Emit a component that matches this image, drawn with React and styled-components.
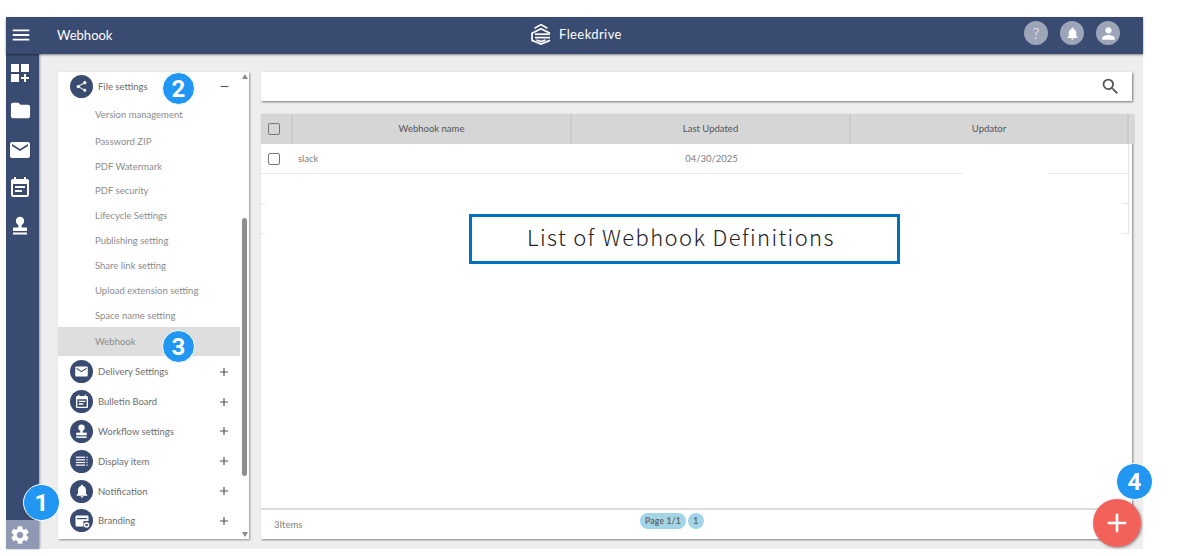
import React from 'react'
import styled, { createGlobalStyle } from 'styled-components'
import { MdMenu, MdDashboardCustomize, MdFolder, MdEmail, MdEventNote, MdSettings, MdShare, MdNotifications, MdPerson, MdSearch, MdAdd, MdRemove } from 'react-icons/md'

// icons the icon package doesn't have
const StampIcon = ({ size = 20 }) => (
  <svg width={size} height={size} viewBox="0 0 20 20" fill="currentColor">
    <circle cx="10" cy="5" r="4.2" />
    <rect x="8.4" y="7" width="3.2" height="5" />
    <path d="M3 11.5h14v3.5H3z" />
    <rect x="3" y="16.5" width="14" height="2" />
  </svg>
)

const ListIcon = ({ size = 14 }) => (
  <svg width={size} height={size} viewBox="0 0 16 16" fill="currentColor">
    <rect x="1" y="3" width="10.5" height="1.4" />
    <rect x="1" y="6" width="10.5" height="1.4" />
    <rect x="1" y="9" width="10.5" height="1.4" />
    <rect x="1" y="12" width="10.5" height="1.4" />
    <rect x="13" y="3" width="1.4" height="1.4" />
    <rect x="13" y="6" width="1.4" height="1.4" />
    <rect x="13" y="9" width="1.4" height="1.4" />
    <rect x="13" y="12" width="1.4" height="1.4" />
  </svg>
)

const BrandingIcon = ({ size = 16 }) => (
  <svg width={size} height={size} viewBox="0 0 16 16" fill="currentColor">
    <path d="M2.5 2.5h11a1 1 0 0 1 1 1V8h-5v5.5h-7a1 1 0 0 1-1-1v-9a1 1 0 0 1 1-1z" />
    <rect x="3" y="5" width="10" height="1.2" fill="#3a4b72" />
    <circle cx="12.6" cy="12" r="2" fill="none" stroke="currentColor" strokeWidth="1.4" />
  </svg>
)

const LogoMark = () => (
  <svg width="22" height="22" viewBox="0 0 22 22" fill="none" stroke="#fff" strokeWidth="1.7">
    <path d="M4.5 5.2 11 1.6l6.5 3.6" />
    <path d="M20 10.2 11 5.8 2 10.2v7.2L11 21l9-3.6" />
    <path d="M5 11.2h15" />
    <path d="M5 14.6h15" />
    <path d="M6.5 17 11 18.6l4.5-1.6" />
  </svg>
)

const railItems = [
  { name: 'dashboard', icon: <MdDashboardCustomize size={24} />, h: 37 },
  { name: 'folder', icon: <MdFolder size={23} />, h: 39 },
  { name: 'mail', icon: <MdEmail size={24} />, h: 39 },
  { name: 'board', icon: <MdEventNote size={24} />, h: 38 },
  { name: 'workflow', icon: <StampIcon />, h: 38 },
]

const subItems = [
  { label: 'Version management', h: 28 },
  { label: 'Password ZIP', h: 26 },
  { label: 'PDF Watermark', h: 24 },
  { label: 'PDF security', h: 25 },
  { label: 'Lifecycle Settings', h: 25 },
  { label: 'Publishing setting', h: 25 },
  { label: 'Share link setting', h: 25 },
  { label: 'Upload extension setting', h: 25 },
  { label: 'Space name setting', h: 24 },
  { label: 'Webhook', h: 29, active: true },
]

const groups = [
  { label: 'Delivery Settings', icon: <MdEmail size={15} /> },
  { label: 'Bulletin Board', icon: <MdEventNote size={16} /> },
  { label: 'Workflow settings', icon: <StampIcon size={15} /> },
  { label: 'Display item', icon: <ListIcon /> },
  { label: 'Notification', icon: <MdNotifications size={16} /> },
  { label: 'Branding', icon: <BrandingIcon /> },
]

const callouts = [
  { n: 1, x: 23, y: 484, d: 37 },
  { n: 2, x: 162, y: 72, d: 33 },
  { n: 3, x: 162, y: 330, d: 33 },
  { n: 4, x: 1116, y: 463, d: 37 },
]

export default function App() {
  return (
    <Page>
      <GlobalStyle />
      <Shell>
        <Header>
          <Burger><MdMenu size={22} /></Burger>
          <Title>Webhook</Title>
          <Logo><LogoMark /><LogoText>Fleekdrive</LogoText></Logo>
          <HeaderActions>
            <RoundAction><Help>?</Help></RoundAction>
            <RoundAction><MdNotifications size={15} /></RoundAction>
            <RoundAction><MdPerson size={19} /></RoundAction>
          </HeaderActions>
        </Header>
        <Body>
          <Rail>
            {railItems.map((r) => (
              <RailItem key={r.name} $h={r.h}>{r.icon}</RailItem>
            ))}
            <GearCell><MdSettings size={22} /></GearCell>
          </Rail>
          <Content>
            <MenuPanel>
              <MenuList>
                <GroupRow $h={28}>
                  <GroupIcon><MdShare size={13} /></GroupIcon>
                  <GroupLabel>File settings</GroupLabel>
                  <Toggle><MdRemove size={13} /></Toggle>
                </GroupRow>
                {subItems.map((s) => (
                  <SubRow key={s.label} $h={s.h} $active={s.active}>{s.label}</SubRow>
                ))}
                <Spacer />
                {groups.map((g) => (
                  <GroupRow key={g.label} $h={29.8}>
                    <GroupIcon>{g.icon}</GroupIcon>
                    <GroupLabel>{g.label}</GroupLabel>
                    <Toggle><MdAdd size={14} /></Toggle>
                  </GroupRow>
                ))}
              </MenuList>
              <Scrollbar>
                <ArrowUp />
                <Thumb />
                <ArrowDown />
              </Scrollbar>
            </MenuPanel>
            <Main>
              <SearchBar><MdSearch size={21} /></SearchBar>
              <TablePanel>
                <HeadRow>
                  <CheckCell><Check /></CheckCell>
                  <HeadCell>Webhook name</HeadCell>
                  <HeadCell>Last Updated</HeadCell>
                  <HeadCell>Updator</HeadCell>
                </HeadRow>
                <DataRow>
                  <CheckCell><Check /></CheckCell>
                  <DataCell>slack</DataCell>
                  <DataCell $center>04/30/2025</DataCell>
                  <DataCell />
                </DataRow>
                <DataRow />
                <DataRow />
                <RowsMask />
                <GapMask />
                <Footer>
                  <Count>3Items</Count>
                  <Pager>
                    <Pill>Page 1/1</Pill>
                    <Pill>1</Pill>
                  </Pager>
                </Footer>
              </TablePanel>
            </Main>
          </Content>
        </Body>
      </Shell>
      <Caption>List of Webhook Definitions</Caption>
      {callouts.map((c) => (
        <Callout key={c.n} $x={c.x} $y={c.y} $d={c.d}>{c.n}</Callout>
      ))}
      <Fab><MdAdd size={32} /></Fab>
    </Page>
  )
}

// view(CSS in JS)
const GlobalStyle = createGlobalStyle`
  body {
    margin: 0;
    background: #fff;
    font-family: "Lato", "Open Sans", sans-serif;
  }
`

const Page = styled.div`
  position: relative;
  width: 1177px;
  height: 556px;
  padding: 17px 0 0 6px;
  box-sizing: border-box;
  overflow: hidden;
`

const Shell = styled.div`
  display: flex;
  flex-direction: column;
  width: 1137px;
  height: 532px;
  background: #eeeeee;
`

const Header = styled.header`
  position: relative;
  display: grid;
  grid-template-columns: 33px 491px auto 1fr;
  align-items: center;
  height: 37px;
  flex: none;
  background: #3a4b72;
  color: #fff;
  box-shadow: 0 1px 2px rgba(0, 0, 0, 0.45);
`

const Burger = styled.div`
  display: flex;
  justify-content: center;
  padding: 0 4px 2px 0;
`

const Title = styled.div`
  padding: 0 0 1px 18px;
  font-size: 13px;
  font-weight: 400;
`

const Logo = styled.div`
  display: flex;
  align-items: center;
  gap: 7px;
  padding-bottom: 4px;
`

const LogoText = styled.span`
  font-size: 13px;
  font-weight: 400;
  letter-spacing: 0.4px;
  color: #fff;
`

const HeaderActions = styled.div`
  display: flex;
  justify-content: flex-end;
  gap: 12px;
  padding: 0 23px 5px 0;
`

const RoundAction = styled.div`
  display: flex;
  align-items: center;
  justify-content: center;
  width: 24px;
  height: 24px;
  border-radius: 50%;
  background: #9da5b9;
  color: #fff;
`

const Help = styled.span`
  font-size: 15px;
  font-weight: 300;
  line-height: 1;
`

const Body = styled.div`
  display: flex;
  flex: 1;
  min-height: 0;
`

const Rail = styled.nav`
  display: flex;
  flex-direction: column;
  flex: none;
  width: 33px;
  background: #3a4b72;
  color: #fff;
  box-shadow: 1px 0 2px rgba(0, 0, 0, 0.35);
`

const RailItem = styled.div`
  display: flex;
  align-items: center;
  justify-content: center;
  height: ${(p) => p.$h}px;
  padding-right: 5px;
`

const GearCell = styled.div`
  display: flex;
  align-items: center;
  justify-content: center;
  height: 29px;
  margin-top: auto;
  padding-right: 5px;
  background: #8f99b3;
`

const Content = styled.div`
  display: flex;
  flex: 1;
  gap: 12px;
  min-width: 0;
  padding: 18px 11px 10px 19px;
`

const MenuPanel = styled.aside`
  display: flex;
  flex: none;
  width: 191px;
  background: #fff;
  box-shadow: 1px 1px 2px rgba(0, 0, 0, 0.4);
`

const MenuList = styled.div`
  display: flex;
  flex-direction: column;
  flex: 1;
  min-width: 0;
`

const GroupRow = styled.div`
  display: flex;
  align-items: center;
  height: ${(p) => p.$h}px;
  flex: none;
  padding: 0 9px 0 12px;
`

const GroupIcon = styled.span`
  display: flex;
  align-items: center;
  justify-content: center;
  flex: none;
  width: 23px;
  height: 23px;
  border-radius: 50%;
  background: #3a4b72;
  color: #fff;
`

const GroupLabel = styled.span`
  flex: 1;
  padding-left: 5px;
  font-size: 9.5px;
  color: #6e6e6e;
`

const Toggle = styled.span`
  display: flex;
  color: #555;
`

const SubRow = styled.div`
  display: flex;
  align-items: center;
  flex: none;
  height: ${(p) => p.$h}px;
  padding-left: 37px;
  font-size: 9.5px;
  color: #8c8c8c;
  background: ${(p) => (p.$active ? '#dedede' : 'transparent')};
`

const Spacer = styled.div`
  height: 1px;
  flex: none;
`

const Scrollbar = styled.div`
  display: flex;
  flex-direction: column;
  align-items: center;
  flex: none;
  width: 9px;
  padding: 2px 0;
  box-sizing: border-box;
`

const ArrowUp = styled.span`
  width: 0;
  height: 0;
  border-left: 3px solid transparent;
  border-right: 3px solid transparent;
  border-bottom: 5px solid #8a8a8a;
`

const ArrowDown = styled.span`
  width: 0;
  height: 0;
  margin-top: auto;
  border-left: 3px solid transparent;
  border-right: 3px solid transparent;
  border-top: 5px solid #8a8a8a;
`

const Thumb = styled.div`
  width: 5px;
  height: 258px;
  margin-top: 139px;
  border-radius: 3px;
  background: #8f8f8f;
`

const Main = styled.main`
  display: flex;
  flex-direction: column;
  flex: 1;
  gap: 13px;
  min-width: 0;
`

const SearchBar = styled.div`
  display: flex;
  align-items: center;
  justify-content: flex-end;
  flex: none;
  height: 29px;
  padding-right: 11px;
  background: #fff;
  color: #555;
  box-shadow: 1px 1px 2px rgba(0, 0, 0, 0.5);
`

const TablePanel = styled.section`
  position: relative;
  display: flex;
  flex-direction: column;
  flex: 1;
  min-height: 0;
  background: #fff;
  box-shadow: 1px 1px 2px rgba(0, 0, 0, 0.45);
`

const HeadRow = styled.div`
  display: grid;
  grid-template-columns: 32px 279px 279px 278px;
  height: 30px;
  flex: none;
  background: #d6d6d6;
  box-shadow: 3px 0 0 #d6d6d6;
`

const HeadCell = styled.div`
  display: flex;
  align-items: center;
  justify-content: center;
  padding-bottom: 2px;
  border-right: 2px solid #cbcbcb;
  font-size: 9.5px;
  color: #555;
`

const CheckCell = styled.div`
  display: flex;
  align-items: center;
  padding-left: 7px;
  ${HeadRow} & {
    border-right: 2px solid #cbcbcb;
  }
`

const DataRow = styled.div`
  display: grid;
  grid-template-columns: 32px 279px 279px 277px;
  width: 868px;
  height: 30px;
  flex: none;
  box-sizing: border-box;
  border-bottom: 1px solid #e6e6e6;
  border-right: 1px solid #e6e6e6;
`

const DataCell = styled.div`
  display: flex;
  align-items: center;
  justify-content: ${(p) => (p.$center ? 'center' : 'flex-start')};
  padding-left: ${(p) => (p.$center ? '0' : '5px')};
  font-size: 9.5px;
  color: #808080;
`

const Check = styled.span`
  display: block;
  width: 12px;
  height: 12px;
  box-sizing: border-box;
  border: 1px solid #777;
  border-radius: 2px;
  background: transparent;
`

const RowsMask = styled.div`
  position: absolute;
  left: 4px;
  top: 60px;
  width: 857px;
  height: 60px;
  background: #fff;
`

const GapMask = styled.div`
  position: absolute;
  left: 701px;
  top: 56px;
  width: 86px;
  height: 6px;
  background: #fff;
`

const Footer = styled.div`
  display: flex;
  align-items: flex-start;
  height: 31px;
  flex: none;
  margin-top: auto;
  box-sizing: border-box;
  border-top: 2px solid #dcdcdc;
`

const Count = styled.span`
  width: 379px;
  padding: 8.5px 0 0 13px;
  box-sizing: border-box;
  font-size: 9.5px;
  color: #808080;
`

const Pager = styled.div`
  display: flex;
  gap: 2px;
  padding-top: 3px;
`

const Pill = styled.span`
  display: flex;
  align-items: center;
  justify-content: center;
  min-width: 16px;
  height: 16px;
  padding: 0 5px;
  box-sizing: border-box;
  border-radius: 8px;
  background: #a3d5e8;
  font-size: 8.5px;
  font-weight: 700;
  letter-spacing: 0.2px;
  color: #666;
`

const Caption = styled.div`
  position: absolute;
  left: 469px;
  top: 214px;
  display: flex;
  align-items: center;
  justify-content: center;
  width: 431px;
  height: 50px;
  padding: 0 7px 6px 0;
  box-sizing: border-box;
  border: 3px solid #0070c0;
  background: #fff;
  font-family: "Noto Sans CJK JP", "Noto Sans", sans-serif;
  font-size: 22px;
  font-weight: 300;
  letter-spacing: 1.4px;
  color: #222;
`

const Callout = styled.div`
  position: absolute;
  left: ${(p) => p.$x}px;
  top: ${(p) => p.$y}px;
  display: flex;
  align-items: center;
  justify-content: center;
  width: ${(p) => p.$d}px;
  height: ${(p) => p.$d}px;
  box-sizing: border-box;
  border: 1px solid #fff;
  border-radius: 50%;
  background: #2196f3;
  font-family: "Roboto", "Liberation Sans", sans-serif;
  font-size: 24px;
  font-weight: 700;
  color: #fff;
`

const Fab = styled.div`
  position: absolute;
  left: 1093px;
  top: 499px;
  display: flex;
  align-items: center;
  justify-content: center;
  width: 48px;
  height: 48px;
  border-radius: 50%;
  background: #f2625a;
  color: #fff;
  box-shadow: 1px 1px 3px rgba(0, 0, 0, 0.4);
`
